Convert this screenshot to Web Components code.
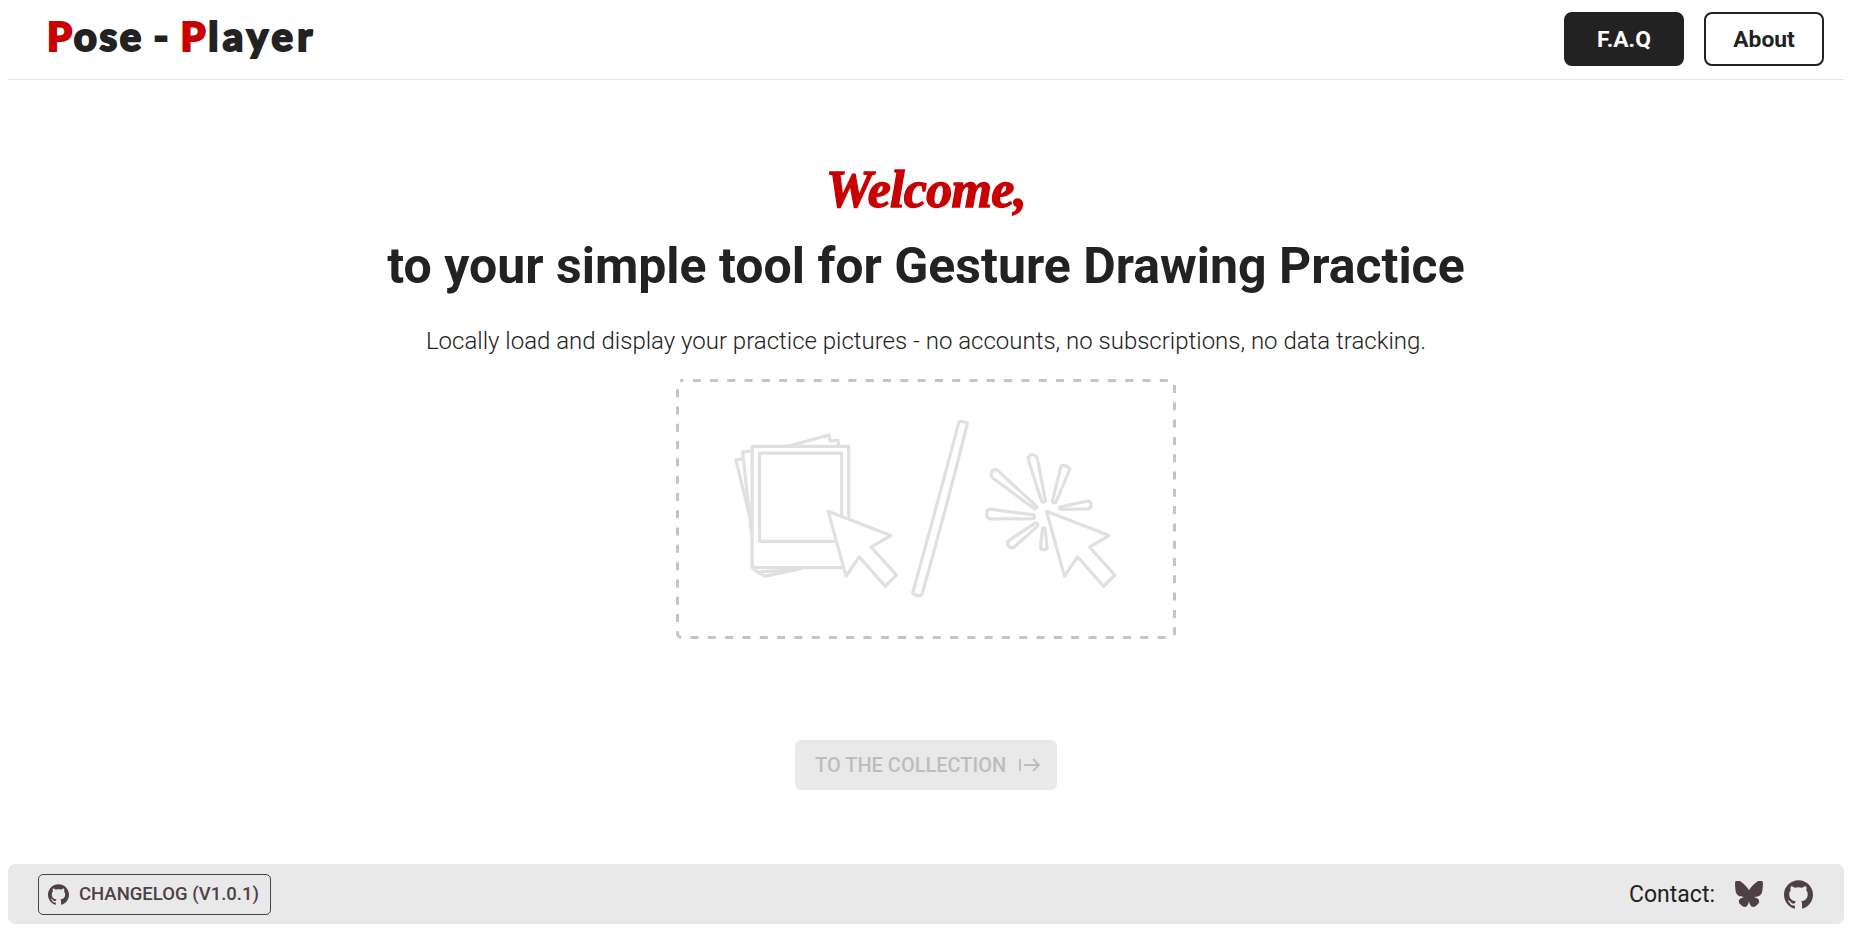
<!doctype html>
<html><head><meta charset="utf-8"><style>
html,body{margin:0;background:#fff}
body{padding:0 8px;height:930px;box-sizing:border-box;font-family:Roboto,sans-serif;color:#222;overflow:hidden}
</style></head><body>
<pose-app></pose-app>
<script>
const GH='M12 .297c-6.63 0-12 5.373-12 12 0 5.303 3.438 9.8 8.205 11.385.6.113.82-.258.82-.577 0-.285-.01-1.04-.015-2.04-3.338.724-4.042-1.61-4.042-1.61C4.422 18.07 3.633 17.7 3.633 17.7c-1.087-.744.084-.729.084-.729 1.205.084 1.838 1.236 1.838 1.236 1.07 1.835 2.809 1.305 3.495.998.108-.776.417-1.305.76-1.605-2.665-.3-5.466-1.332-5.466-5.93 0-1.31.465-2.38 1.235-3.22-.135-.303-.54-1.523.105-3.176 0 0 1.005-.322 3.3 1.23.96-.267 1.98-.399 3-.405 1.02.006 2.04.138 3 .405 2.28-1.552 3.285-1.23 3.285-1.23.645 1.653.24 2.873.12 3.176.765.84 1.23 1.91 1.23 3.22 0 4.61-2.805 5.625-5.475 5.92.42.36.81 1.096.81 2.22 0 1.606-.015 2.896-.015 3.286 0 .315.21.69.825.57C20.565 22.092 24 17.592 24 12.297c0-6.627-5.373-12-12-12';
const ghIcon=s=>`<svg width="${s}" height="${s}" viewBox="0 0 24 24" fill="#4f4047" style="display:block"><path d="${GH}"/></svg>`;
function def(name,html){customElements.define(name,class extends HTMLElement{constructor(){super();this.attachShadow({mode:'open'}).innerHTML=html}})}

def('pose-header',`<style>
:host{display:flex;align-items:center;justify-content:space-between;height:79px;border-bottom:1px solid #e6e6e6;padding:0 20px 0 39px}
.logo{font:900 40px/1 Lato,sans-serif;color:#222;-webkit-text-stroke:2px currentColor;letter-spacing:2.6px;word-spacing:-2.500px;margin-top:-7px}
.logo b{color:#c80000;font-weight:900}
.logo i{font-style:normal;letter-spacing:4.2px}
nav{display:flex;gap:20px;margin-top:-1px}
a{display:flex;align-items:center;justify-content:center;width:120px;height:54px;box-sizing:border-box;border:2px solid #222;border-radius:8px;font:700 22.8px Roboto,sans-serif;color:#222}
a.d{background:#222;color:#fff}
</style><div class="logo"><b>P</b>ose - <b>P</b><i>layer</i></div><nav><a class="d">F.A.Q</a><a>About</a></nav>`);

def('drop-zone',`<style>
:host{display:block;position:relative;width:500px;height:260px}
svg{display:block;position:absolute;inset:0;width:100%;height:100%}
</style>
<svg viewBox="0 0 500 260"><rect x="1.5" y="1.5" width="497" height="257" rx="4" fill="none" stroke="#c4c4c4" stroke-width="3" stroke-dasharray="8 9.3" stroke-dashoffset="6.1"/></svg>
<svg viewBox="48 27 1479 769" fill="#fff" stroke="#e0e0e0" stroke-width="9.5" stroke-linejoin="round" stroke-linecap="round">
<g fill="none">
<path d="M378 226 500 193 505 211 527 208 530 226"/>
<path d="M273 240 245 243 272 490"/>
<path d="M245 263 225 266 270 450"/>
<path d="M273 585 288 598 385 592M288 598 313 610 420 587"/>
</g>
<rect x="273" y="226" width="286" height="359" fill="none"/>
<rect x="295" y="246" width="243" height="261" fill="none"/>
<path d="M498 418 683 490 625 524 700 607 667 640 590 553 551 610Z"/>
<path d="M498 418 683 490 625 524 700 607 667 640 590 553 551 610Z" transform="translate(646 0)"/>
<path fill="none" d="M885 154Q897 150 910 158Q845 420 775 665Q760 672 748 660Q820 400 885 154Z"/>
<g fill="none">
<path d="M981 305Q985 292 998 296L1116 405 1110 412 985 320Q978 314 981 305Z"/>
<path d="M1090 265Q1090 250 1105 251Q1116 254 1118 268L1141 387Q1135 395 1130 390Z"/>
<path d="M1187 285Q1200 278 1213 293L1172 391Q1165 397 1161 389Z"/>
<path d="M1183 406 1266 388Q1276 388 1276 400Q1276 410 1265 411L1188 413Q1182 412 1183 406Z"/>
<path d="M977 412 1105 429Q1112 434 1105 440L978 441Q965 438 967 424Q968 412 977 412Z"/>
<path d="M1112 452Q1121 456 1117 463L1047 525Q1037 530 1030 518Q1027 508 1035 503Z"/>
<path d="M1132 470Q1136 465 1140 470L1146 528Q1136 535 1126 528Z"/>
</g>
</svg>`);

def('pose-hero',`<style>
:host{display:flex;flex-direction:column;align-items:center;flex:1;padding-top:80px}
.w{font:italic 700 52px/60px "Liberation Serif",serif;color:#c80000;-webkit-text-stroke:1.4px #c80000;letter-spacing:-.7px;height:60px}
h1{margin:15px 0 0;font:700 50px/62px Roboto,sans-serif;color:#222}
p{margin:28px 0 0;font:300 24px/32px Roboto,sans-serif;color:#222}
drop-zone{margin-top:22px}
.b{margin-top:101px;display:flex;align-items:center;gap:13px;width:262px;height:50px;box-sizing:border-box;padding-left:20px;background:#e9e9e9;border-radius:6px;color:#bdbdbd;font:500 20px Roboto,sans-serif}
</style><div class="w">Welcome,</div><h1>to your simple tool for Gesture Drawing Practice</h1><p>Locally load and display your practice pictures - no accounts, no subscriptions, no data tracking.</p><drop-zone></drop-zone>
<div class="b"><span>TO THE COLLECTION</span><svg width="21" height="16" viewBox="0 0 21 16" fill="none" stroke="#bdbdbd" stroke-width="1.8"><path d="M1 2v12M5 8h15M14 2l6 6-6 6"/></svg></div>`);

def('pose-footer',`<style>
:host{display:flex;align-items:center;justify-content:space-between;height:60px;background:#e9e9e9;border-radius:7px;padding:0 31px 0 30px;margin-bottom:6px}
.c{display:flex;align-items:center;gap:10px;height:41px;width:233px;box-sizing:border-box;padding-left:9px;border:1px solid #4f4047;border-radius:5px;color:#4f4047;font:500 18.5px Roboto,sans-serif;white-space:nowrap}
.r{display:flex;align-items:center;font:400 23px Roboto,sans-serif;color:#222}
.r svg{display:block}
</style><div class="c">${ghIcon(21)}<span>CHANGELOG (V1.0.1)</span></div>
<div class="r"><span>Contact:</span><svg style="margin-left:20px" width="28" height="26" viewBox="0 0 28 26" fill="#4f4047"><path d="M6 .8C9.4 3.2 12.8 8 14 10.6 15.2 8 18.600 3.200 22 .8 24.500-1 28-2.100 28 3.300c0 1.100-.6 8.600-1 9.900-1.300 4.400-5.800 5.500-9.800 4.800 7 1.200 8.800 5.200 5 9.100C14.900 35 13.500 21 14 20.500 14.500 21 13.100 35 5.800 27.100 2 23.200 3.800 19.200 10.800 18 6.800 18.700 2.300 17.600 1 13.200.6 11.900 0 4.400 0 3.300 0-2.100 3.500-1 6 .8Z" transform="scale(1 .88)"/></svg><span style="margin-left:21px;display:block">${ghIcon(29)}</span></div>`);

def('pose-app',`<style>:host{display:flex;flex-direction:column;height:930px}</style><pose-header></pose-header><pose-hero></pose-hero><pose-footer></pose-footer>`);
</script></body></html>
